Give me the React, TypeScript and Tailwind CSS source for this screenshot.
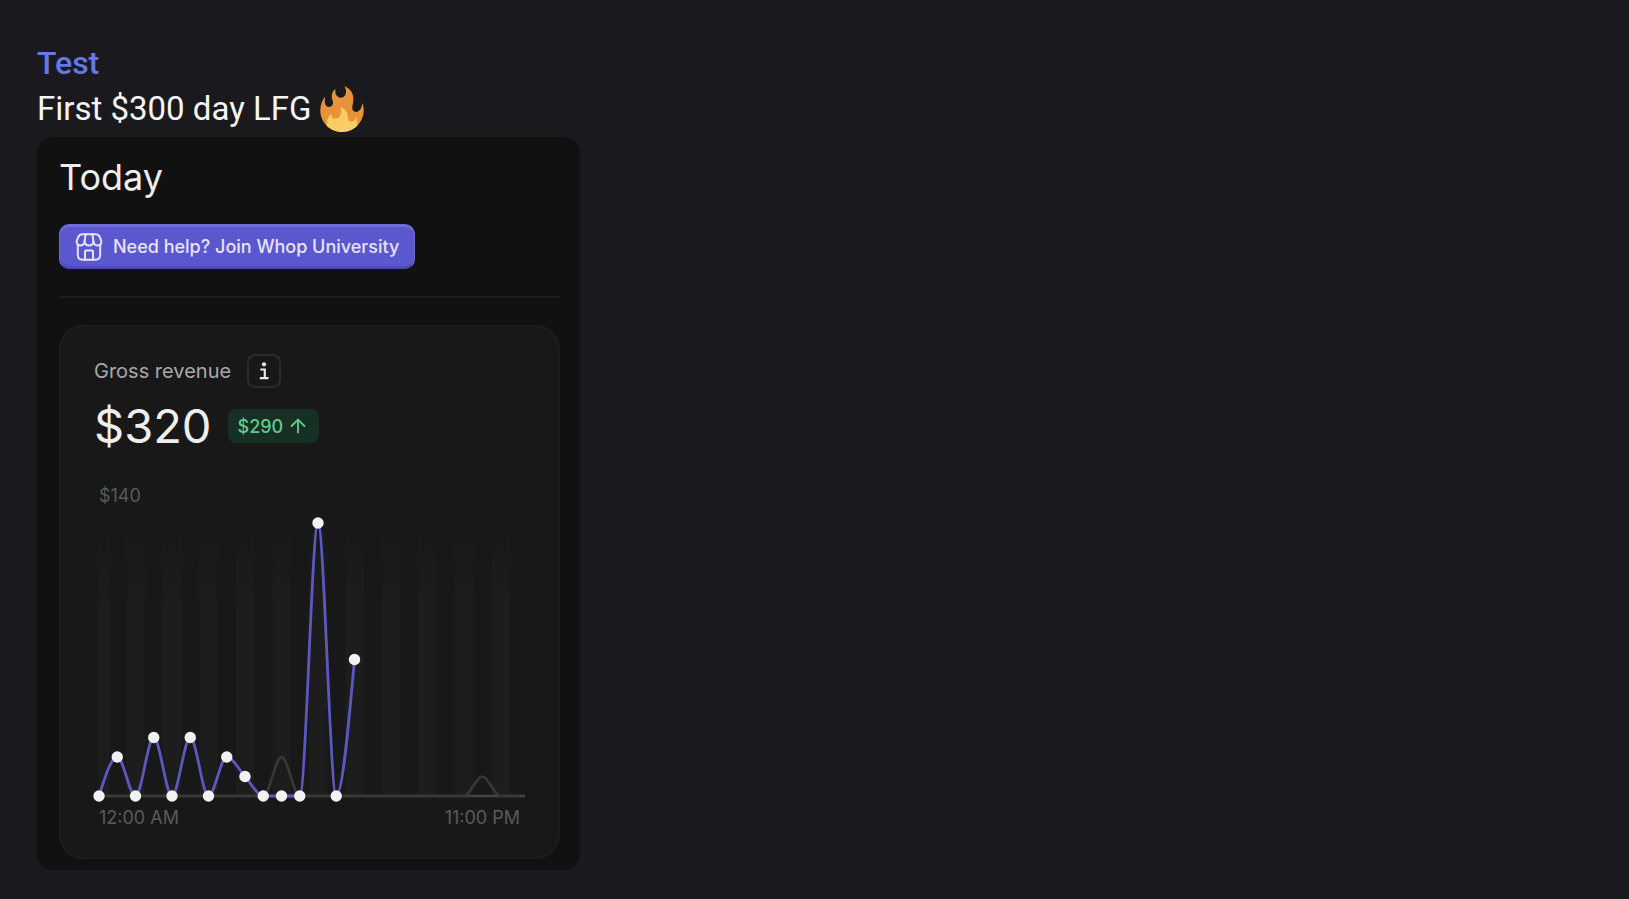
import { ArrowUp } from "lucide-react";

const CHART_WIDTH = 431;
const CHART_HEIGHT = 290;
const BASELINE = 284;
const STEP = 18.25;

const todayRevenue = [0, 20, 0, 30, 0, 30, 0, 20, 10, 0, 0, 0, 140, 0, 70];
const previousRevenue = [0, 0, 0, 0, 0, 0, 0, 0, 0, 0, 20, 0, 0, 0, 0, 0, 0, 0, 0, 0, 0, 10, 0, 0];
const stripes = [1, 2, 3, 4, 5, 6, 7, 8, 9, 10, 11];

const pointX = (index: number) => 5 + index * STEP;
const pointY = (value: number) => BASELINE - value * 1.95;

// Monotone cubic curve, so the line never dips below zero between points
const buildPath = (values: number[]) => {
  const slopes = values.slice(1).map((v, i) => (pointY(v) - pointY(values[i])) / STEP);
  const last = values.length - 1;
  const tangents = values.map((_, i) => {
    if (i === 0 || i === last) return 0;
    const a = slopes[i - 1];
    const b = slopes[i];
    if (a * b <= 0) return 0;
    return Math.sign(a) * Math.min(Math.abs(a), Math.abs(b), Math.abs(a + b) / 4) * 2;
  });
  tangents[0] = (3 * slopes[0] - tangents[1]) / 2;
  tangents[last] = (3 * slopes[last - 1] - tangents[last - 1]) / 2;

  return values.reduce((path, value, i) => {
    const x = pointX(i);
    const y = pointY(value);
    if (i === 0) return `M${x},${y}`;
    const dx = STEP / 3;
    const prevX = pointX(i - 1) + dx;
    const prevY = pointY(values[i - 1]) + tangents[i - 1] * dx;
    return `${path}C${prevX},${prevY} ${x - dx},${y - tangents[i] * dx} ${x},${y}`;
  }, "");
};

const FireEmoji = () => (
  <svg viewBox="0 0 36 36" role="img" aria-label="fire" className="size-[46px] shrink-0">
    <path
      fill="#e8933a"
      d="M35 19c0-2.062-.367-4.039-1.04-5.868-.46 5.389-3.333 8.157-6.335 6.868-2.812-1.208-.917-5.917-.777-8.164.236-3.809-.012-8.169-6.931-11.794 2.875 5.5.333 8.917-2.333 9.125-2.958.231-5.667-2.542-4.667-7.042-3.238 2.386-3.332 6.402-2.333 9 1.042 2.708-.042 4.958-2.583 5.208-2.84.28-4.418-3.041-2.963-8.333C2.52 10.965 1 14.805 1 19c0 9.389 7.611 17 17 17s17-7.611 17-17z"
    />
    <path
      fill="#f8ce62"
      d="M28.394 23.999c.148 3.084-2.561 4.293-4.019 3.709-2.106-.843-1.541-2.291-2.083-5.291s-2.625-5.083-5.708-6c2.25 6.333-1.247 8.667-3.08 9.084-1.872.426-3.753-.001-3.968-4.007C7.352 23.668 6 26.676 6 30c0 .368.023.73.055 1.09C9.125 34.124 13.342 36 18 36s8.875-1.876 11.945-4.91c.032-.36.055-.722.055-1.09 0-2.187-.584-4.236-1.606-6.001z"
    />
  </svg>
);

const StoreIcon = () => (
  <svg
    viewBox="0 0 28 28"
    fill="none"
    stroke="currentColor"
    strokeWidth="2"
    strokeLinecap="round"
    strokeLinejoin="round"
    aria-hidden="true"
    className="size-7 shrink-0"
  >
    <path d="M7.500 1.200h13c2.200 0 3.700 1.100 4.400 3.100l1.300 3.300c.9 2.500-.8 4.800-3.300 4.800-2.500 0-4.200-1.700-4.500-4.100C18.200 10.700 16.500 12.400 14 12.400S9.800 10.700 9.600 8.300C9.300 10.700 7.600 12.400 5.100 12.400c-2.500 0-4.200-2.300-3.300-4.800l1.300-3.300c.7-2 2.200-3.100 4.400-3.100z" />
    <path d="M9.600 8.300 10.600 1.200M18.400 8.300 17.400 1.200" />
    <path d="M2.800 12v9.800c0 3.200 1.600 4.900 4.800 4.900h12.800c3.200 0 4.800-1.700 4.800-4.900V12" />
    <path d="M10 26.500v-7.800c0-.8.400-1.200 1.200-1.200h5.600c.8 0 1.200.4 1.200 1.200v7.800" />
  </svg>
);

const InfoIcon = () => (
  <svg viewBox="0 0 12 18" fill="none" stroke="currentColor" strokeWidth="2.200" aria-hidden="true" className="h-[18px] w-3">
    <circle cx="6" cy="2.300" r="2.100" fill="currentColor" stroke="none" />
    <path d="M2.300 7.500H6.800V16M1.800 16.200H10.500" />
  </svg>
);

const RevenueChart = () => (
  <svg
    viewBox={`0 0 ${CHART_WIDTH} ${CHART_HEIGHT}`}
    role="img"
    aria-label="Gross revenue by hour"
    className="mt-1 block w-full overflow-visible"
  >
    <defs>
      <linearGradient id="stripe" x1="0" y1="0" x2="0" y2="1">
        <stop offset="0" stopColor="#1d1d1d" stopOpacity="0" />
        <stop offset="0.3" stopColor="#1d1d1d" />
      </linearGradient>
    </defs>
    <rect x="5" y="11" width="10" height="273" fill="url(#stripe)" />
    {stripes.map((n) => (
      <rect key={n} x={n * STEP * 2 - 4} y="11" width="18" height="273" fill="url(#stripe)" />
    ))}

    <path d={`M5,${BASELINE}H${CHART_WIDTH}`} stroke="#444444" strokeWidth="2.600" />
    <path d={buildPath(previousRevenue)} fill="none" stroke="#383838" strokeWidth="2.600" />
    <path d={buildPath(todayRevenue)} fill="none" stroke="#5c58c0" strokeWidth="2.800" />
    {todayRevenue.map((value, i) => (
      <circle key={i} cx={pointX(i)} cy={pointY(value)} r="5.700" fill="#f2f2f2" />
    ))}
  </svg>
);

const App = () => {
  return (
    <main className="min-h-screen bg-[#1a1a1e] px-[37px] pt-10 pb-7 font-['Inter',sans-serif]">
      <div className="font-['Roboto',sans-serif] leading-[46px]">
        <h1 className="text-[32px] font-medium text-[#6678e8]">Test</h1>
        <p className="flex items-center gap-2 text-[33px] text-[#f4f4f5]">
          First $300 day LFG <FireEmoji />
        </p>
      </div>

      <section className="mt-[5px] w-[543px] max-w-full rounded-2xl bg-[#111111] pt-4 pr-5 pb-[11px] pl-[22px]">
        <h2 className="text-[36px] leading-[48px] text-[#eeeeee]">Today</h2>

        <button
          type="button"
          className="mt-[23px] flex h-[45px] items-center gap-[10px] rounded-[10px] border border-[#6c69d8] border-b-[#4a48a8] bg-[#5a57cf] px-[15px] text-[18px] font-medium text-[#e6e5fb] shadow-[inset_0_2px_1px_#706ddc,inset_0_-2px_1px_#4f4cba]"
        >
          <StoreIcon />
          Need help? Join Whop University
        </button>

        <hr className="mt-[27px] border-t-2 border-[#1d1d1d]" />

        <div className="mt-[27px] rounded-3xl border-2 border-[#1c1c1c] bg-[#181818] px-[33px] py-[27px]">
          <div className="flex items-center gap-4">
            <h3 className="text-[20px] text-[#a8a8a8]">Gross revenue</h3>
            <button
              type="button"
              aria-label="About gross revenue"
              className="flex size-[34px] items-center justify-center rounded-lg border-2 border-[#2b2b2b] text-[#e8e8e8]"
            >
              <InfoIcon />
            </button>
          </div>

          <div className="mt-2 flex h-[60px] items-center gap-4">
            <span className="text-[47px] text-[#eeeeee]">$320</span>
            <span className="flex h-[34px] items-center gap-1 rounded-lg bg-[#163026] px-[10px] text-[18px] font-medium text-[#66c98b]">
              $290
              <ArrowUp className="size-[22px]" />
            </span>
          </div>

          <div className="mt-7 pl-[5px] text-[18px] leading-6 text-[#5a5a5a]">$140</div>
          <RevenueChart />
          <div className="mt-1 flex justify-between px-[5px] text-[18px] leading-6 text-[#5a5a5a]">
            <span>12:00 AM</span>
            <span>11:00 PM</span>
          </div>
        </div>
      </section>
    </main>
  );
};

export default App;
